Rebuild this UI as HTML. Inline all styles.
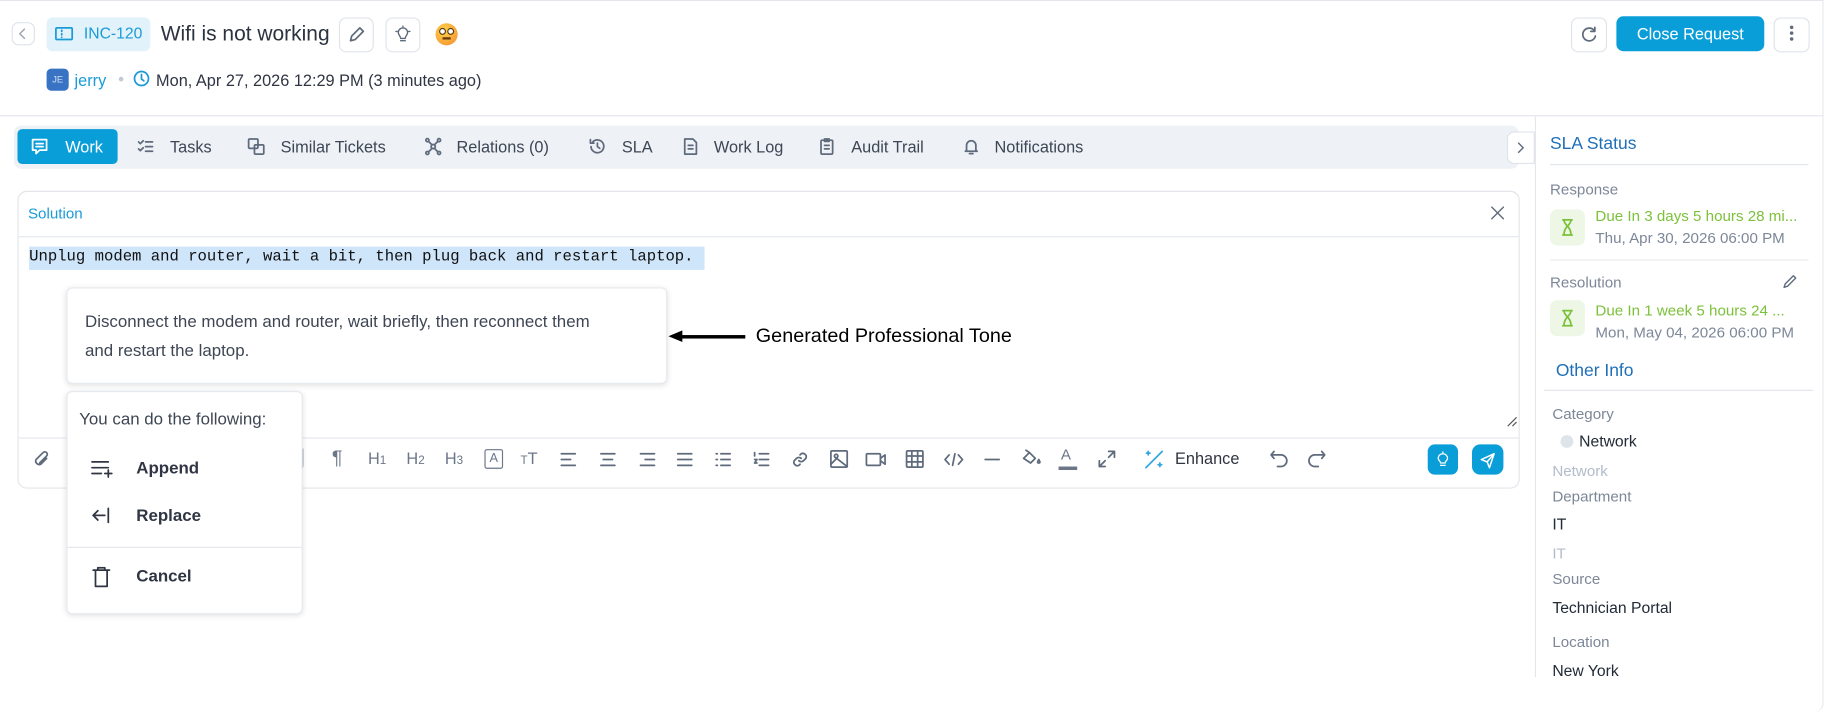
<!DOCTYPE html>
<html><head><meta charset="utf-8"><style>
*{box-sizing:border-box;margin:0;padding:0}
html,body{width:1826px;height:712px;overflow:hidden;background:#fff}
#s{position:absolute;left:0;top:0;width:1568px;height:612px;transform:scale(1.16454,1.16340);transform-origin:0 0;font-family:"Liberation Sans",sans-serif;color:#2f3542}
.a{position:absolute;white-space:nowrap}
.btn{position:absolute;border:1px solid #dfe3ea;border-radius:6px;background:#fff}
svg{position:absolute;fill:none;stroke:#5f6b7c;stroke-width:1.5;stroke-linecap:round;stroke-linejoin:round}
.tab{position:absolute;top:118px;font-size:14px;color:#3d4654}
.lbl{position:absolute;font-size:13px;color:#7c8798;white-space:nowrap}
.val{position:absolute;font-size:13.5px;color:#222b38;white-space:nowrap}
.tb{position:absolute;top:386px;font-size:14px;color:#6b7689}
</style></head><body><div id="s">
<div class="a" style="left:0;top:0;width:1566px;height:612px;border-top:1px solid #e4e7ec;border-right:1px solid #e4e7ec;border-bottom-right-radius:8px"></div>
<div class="a" style="left:0;top:99px;width:1566px;border-top:1px solid #e4e7ec"></div>
<div class="a" style="left:1318px;top:100px;height:482px;border-left:1px solid #e4e7ec"></div>

<div class="btn" style="left:10px;top:19px;width:20px;height:20px"></div>
<svg style="left:14px;top:23px" width="12" height="12"><path d="M7 2L3 6L7 10" stroke="#9aa3b0" stroke-width="1.2"/></svg>
<div class="a" style="left:40px;top:15px;width:89px;height:29px;background:#e1f2fb;border-radius:5px"></div>
<svg style="left:47px;top:22px;stroke:#1a9bd7" width="16" height="14"><rect x="1" y="2" width="14" height="10" rx="1"/><path d="M6 4v1M6 7v1M6 10v0"/></svg>
<div class="a" style="left:72px;top:21px;font-size:13.5px;color:#1a9bd7">INC-120</div>
<div class="a" style="left:138px;top:19px;font-size:18px;color:#2b3340">Wifi is not working</div>
<div class="btn" style="left:291px;top:15px;width:30px;height:30px"></div>
<svg style="left:298px;top:22px" width="16" height="16"><path d="M3 13l1-4 7-7 3 3-7 7z"/></svg>
<div class="btn" style="left:331px;top:15px;width:30px;height:30px"></div>
<svg style="left:338px;top:22px;stroke-width:1.2" width="16" height="16"><path d="M6 13h4M6 11c0-2-2-3-2-5a4 4 0 018 0c0 2-2 3-2 5zM8 0v1M2 5h1M13 5h1"/></svg>
<div class="a" style="left:374px;top:20px;width:19px;height:19px;border-radius:50%;background:radial-gradient(circle at 40% 35%,#ffd34a,#f48a2c)"></div>
<div class="a" style="left:378px;top:25px;width:4px;height:4px;border-radius:50%;background:#fff;box-shadow:0 0 0 1px #5a3a10"></div>
<div class="a" style="left:385px;top:25px;width:4px;height:4px;border-radius:50%;background:#fff;box-shadow:0 0 0 1px #5a3a10"></div>
<div class="a" style="left:380px;top:32px;width:7px;height:1.5px;background:#6b3a10"></div>

<div class="a" style="left:40px;top:59px;width:19px;height:19px;border-radius:4px;background:#3973c4;color:#cfe0f5;font-size:8px;text-align:center;line-height:19px">JE</div>
<div class="a" style="left:64px;top:61px;font-size:14px;color:#1a9bd7">jerry</div>
<div class="a" style="left:102px;top:66px;width:4px;height:4px;border-radius:50%;background:#c3cad4"></div>
<svg style="left:114px;top:60px;stroke:#1a9bd7" width="15" height="15"><circle cx="7.5" cy="7.5" r="6"/><path d="M7.5 4v4l2 1.5"/></svg>
<div class="a" style="left:134px;top:61px;font-size:14px;color:#2f3542">Mon, Apr 27, 2026 12:29 PM (3 minutes ago)</div>

<div class="btn" style="left:1349px;top:15px;width:31px;height:30px"></div>
<svg style="left:1357px;top:22px" width="16" height="16"><path d="M12.5 5A5.5 5.5 0 1 0 13 9M12.5 1.5v3.5H9"/></svg>
<div class="a" style="left:1388px;top:14px;width:127px;height:30px;background:#0a9ed9;border-radius:6px;color:#fff;font-size:14px;text-align:center;line-height:30px">Close Request</div>
<div class="btn" style="left:1523px;top:15px;width:31px;height:30px"></div>
<div class="a" style="left:1537px;top:22px;width:3px;height:3px;border-radius:50%;background:#5f6b7c;box-shadow:0 5px 0 #5f6b7c,0 10px 0 #5f6b7c"></div>

<div class="a" style="left:12px;top:108px;width:1292px;height:37px;background:#eef1f6;border-radius:6px"></div>
<div class="a" style="left:15px;top:111px;width:86px;height:30px;background:#0a9ed9;border-radius:4px"></div>
<svg style="left:26px;top:118px;stroke:#fff" width="16" height="16"><path d="M2 2h12v9H8l-3 3v-3H2zM5 5.5h6M5 8h6"/></svg>
<div class="tab" style="left:56px;color:#fff">Work</div>
<svg style="left:117px;top:118px" width="16" height="16"><path d="M2 4l1.5 1.5L6 3M2 10l1.5 1.5L6 9M8 4h6M8 8h6M8 12h6"/></svg>
<div class="tab" style="left:146px">Tasks</div>
<svg style="left:212px;top:118px" width="16" height="16"><rect x="1.5" y="1.5" width="8" height="8" rx="1"/><rect x="6.5" y="6.5" width="8" height="8" rx="1"/></svg>
<div class="tab" style="left:241px">Similar Tickets</div>
<svg style="left:364px;top:118px" width="16" height="16"><circle cx="8" cy="8" r="1.8"/><circle cx="3" cy="2.5" r="1.3"/><circle cx="13" cy="2.5" r="1.3"/><circle cx="3" cy="13.5" r="1.3"/><circle cx="13" cy="13.5" r="1.3"/><path d="M4 3.5l3 3M12 3.5l-3 3M4 12.5l3-3M12 12.5l-3-3"/></svg>
<div class="tab" style="left:392px">Relations (0)</div>
<svg style="left:505px;top:118px" width="16" height="16"><path d="M2.5 8A5.5 5.5 0 1 0 4 4M2 2v3h3M8 5v3l2 1.5"/></svg>
<div class="tab" style="left:534px">SLA</div>
<svg style="left:585px;top:118px" width="16" height="16"><path d="M3 1.5h7l3 3v10H3zM6 7h4M6 10h4"/></svg>
<div class="tab" style="left:613px">Work Log</div>
<svg style="left:702px;top:118px" width="16" height="16"><rect x="3" y="2.5" width="10" height="12" rx="1"/><path d="M6 1.5h4v2H6zM6 7h4M6 10h4"/></svg>
<div class="tab" style="left:731px">Audit Trail</div>
<svg style="left:826px;top:118px" width="16" height="16"><path d="M4 11V7a4 4 0 018 0v4l1 1H3zM6.5 14h3"/></svg>
<div class="tab" style="left:854px">Notifications</div>
<div class="btn" style="left:1294px;top:113px;width:24px;height:28px;border-radius:6px 0 0 6px"></div>
<svg style="left:1300px;top:121px" width="12" height="12"><path d="M4 2l4 4-4 4" stroke-width="1.2"/></svg>

<div class="a" style="left:15px;top:164px;width:1290px;height:256px;border:1px solid #e2e5ea;border-radius:8px"></div>
<div class="a" style="left:24px;top:176px;font-size:13px;color:#1a9bd7">Solution</div>
<svg style="left:1280px;top:177px" width="12" height="12"><path d="M1 1l10 10M11 1L1 11" stroke-width="1.2"/></svg>
<div class="a" style="left:16px;top:203px;width:1288px;border-top:1px solid #e4e7ec"></div>
<div class="a" style="left:25px;top:212px;height:20px;width:580px;background:#cfe5fa"></div>
<div class="a" style="left:25px;top:214px;font-family:'Liberation Mono',monospace;font-size:13.4px;color:#111">Unplug modem and router, wait a bit, then plug back and restart laptop.</div>
<svg style="left:1291px;top:355px" width="12" height="12"><path d="M11 4L4 11M11 8L8 11" stroke="#555" stroke-width="1"/></svg>
<div class="a" style="left:16px;top:376px;width:1288px;border-top:1px solid #e4e7ec"></div>

<svg style="left:28px;top:387px" width="16" height="16"><path d="M12 7l-5 5a3 3 0 01-4-4l6-6a2 2 0 013 3L6 11"/></svg>
<div class="tb" style="left:255px;font-size:16px">⌡</div>
<div class="tb" style="left:285px;font-size:17px;top:384px">¶</div>
<div class="tb" style="left:316px;font-size:14px">H<span style="font-size:10px">1</span></div>
<div class="tb" style="left:349px">H<span style="font-size:10px">2</span></div>
<div class="tb" style="left:382px">H<span style="font-size:10px">3</span></div>
<div class="a" style="left:416px;top:386px;width:16px;height:17px;border:1.5px solid #6b7689;border-radius:2px;font-size:11px;color:#6b7689;text-align:center;line-height:14px">A</div>
<div class="tb" style="left:447px"><span style="font-size:10px">T</span>T</div>
<svg style="left:480px;top:387px" width="16" height="16"><path d="M2 3h12M2 8h8M2 13h12"/></svg>
<svg style="left:514px;top:387px" width="16" height="16"><path d="M2 3h12M4 8h8M2 13h12"/></svg>
<svg style="left:548px;top:387px" width="16" height="16"><path d="M2 3h12M6 8h8M2 13h12"/></svg>
<svg style="left:580px;top:387px" width="16" height="16"><path d="M2 3h12M2 8h12M2 13h12"/></svg>
<svg style="left:613px;top:387px" width="16" height="16"><path d="M2 3h1M6 3h8M2 8h1M6 8h8M2 13h1M6 13h8"/></svg>
<svg style="left:646px;top:387px" width="16" height="16"><path d="M2 2v3M6 3h8M6 8h8M6 13h8M2 8h2l-2 3h2"/></svg>
<svg style="left:679px;top:387px" width="16" height="16"><path d="M7 9a3 3 0 004 0l2-2a3 3 0 00-4-4L8 4M9 7a3 3 0 00-4 0L3 9a3 3 0 004 4l1-1"/></svg>
<svg style="left:712px;top:386px" width="17" height="17"><rect x="1.5" y="1.5" width="14" height="14" rx="1"/><circle cx="6" cy="6" r="1.5"/><path d="M1.5 13l5-5 9 7"/></svg>
<svg style="left:743px;top:387px" width="19" height="16"><rect x="1" y="3" width="12" height="10" rx="1"/><path d="M13 7l4-3v8l-4-3"/></svg>
<svg style="left:777px;top:386px" width="17" height="17"><rect x="1.5" y="1.5" width="14" height="14" rx="1"/><path d="M6 1.5v14M11 1.5v14M1.5 6h14M1.5 11h14"/></svg>
<svg style="left:810px;top:387px" width="18" height="16"><path d="M5 4L1.5 8 5 12M13 4l3.5 4-3.5 4M10 3L8 13"/></svg>
<svg style="left:844px;top:387px" width="16" height="16"><path d="M2 8h12"/></svg>
<svg style="left:876px;top:385px" width="18" height="18"><path d="M3 9l5-5 5 5-4 4zM5 2l3 2M15 12a1 1 0 002 0l-1-2z"/></svg>
<div class="tb" style="left:911px;font-size:13px;top:383px">A</div>
<div class="a" style="left:909px;top:401px;width:16px;height:3px;background:#6b7689"></div>
<svg style="left:942px;top:386px" width="17" height="17"><path d="M10 2h5v5M15 2l-5 5M7 15H2v-5M2 15l5-5"/></svg>
<svg style="left:982px;top:386px;stroke:#2fa7df" width="18" height="18"><path d="M2 16L16 2M4 2v3M2.5 3.5h3M14 12v3M12.5 13.5h3"/></svg>
<div class="tb" style="left:1009px;color:#2f3542">Enhance</div>
<svg style="left:1090px;top:386px" width="17" height="17"><path d="M4 2L1.5 5 4 8M1.5 5H10a5 5 0 010 10H7"/></svg>
<svg style="left:1122px;top:386px" width="17" height="17"><path d="M13 2l2.5 3L13 8M15.5 5H7a5 5 0 000 10h3"/></svg>
<div class="a" style="left:1226px;top:382px;width:26px;height:26px;background:#0a9ed9;border-radius:6px"></div>
<svg style="left:1232px;top:388px;stroke:#fff;stroke-width:1.1" width="14" height="14"><path d="M5 12h4M5 10c0-2-2-2-2-4a4 4 0 018 0c0 2-2 2-2 4zM7 0v1"/></svg>
<div class="a" style="left:1264px;top:382px;width:27px;height:26px;background:#0a9ed9;border-radius:7px"></div>
<svg style="left:1270px;top:388px;stroke:#fff;stroke-width:1.3" width="15" height="15"><path d="M13 2L2 7l5 2 2 5zM13 2L7 9"/></svg>

<div class="a" style="left:57px;top:247px;width:516px;height:83px;background:#fff;border:1px solid #e6e9ee;border-radius:5px;box-shadow:0 1px 5px rgba(0,0,0,.12)"></div>
<div class="a" style="left:73px;top:265px;font-size:14.5px;line-height:24.5px;color:#3e4654;white-space:normal;width:450px">Disconnect the modem and router, wait briefly, then reconnect them and restart the laptop.</div>
<div class="a" style="left:584px;top:288px;width:56px;height:3px;background:#000"></div>
<svg style="left:574px;top:283px;fill:#000;stroke:none" width="12" height="12"><path d="M0 6L12 1v10z"/></svg>
<div class="a" style="left:649px;top:279px;font-size:17px;color:#000">Generated Professional Tone</div>

<div class="a" style="left:57px;top:336px;width:203px;height:192px;background:#fff;border:1px solid #e6e9ee;border-radius:5px;box-shadow:0 1px 5px rgba(0,0,0,.12)"></div>
<div class="a" style="left:68px;top:353px;font-size:14.5px;color:#3e4654">You can do the following:</div>
<svg style="left:78px;top:394px;stroke:#2f3542" width="20" height="20"><path d="M1 3h14M1 8h14M1 13h8M12 13h6M15 10v6"/></svg>
<div class="a" style="left:117px;top:395px;font-size:14.5px;font-weight:bold;color:#2f3542">Append</div>
<svg style="left:78px;top:435px;stroke:#2f3542" width="20" height="20"><path d="M2 8h10M6 4L2 8l4 4M15 2v12"/></svg>
<div class="a" style="left:117px;top:436px;font-size:14.5px;font-weight:bold;color:#2f3542">Replace</div>
<div class="a" style="left:58px;top:470px;width:201px;border-top:1px solid #e4e7ec"></div>
<svg style="left:78px;top:487px;stroke:#2f3542" width="20" height="20"><path d="M2 3h14M6 3V1h6v2M4 3v14h10V3"/></svg>
<div class="a" style="left:117px;top:488px;font-size:14.5px;font-weight:bold;color:#2f3542">Cancel</div>

<div class="a" style="left:1331px;top:115px;font-size:15px;color:#1f6fb7">SLA Status</div>
<div class="a" style="left:1331px;top:141px;width:222px;border-top:1px solid #e1e4ea"></div>
<div class="lbl" style="left:1331px;top:155px">Response</div>
<div class="a" style="left:1331px;top:180px;width:30px;height:31px;background:#eef7e6;border-radius:6px"></div>
<svg style="left:1339px;top:188px;stroke:#7cc13a" width="14" height="15"><path d="M3 1h8M3 14h8M4 1c0 5 6 5 6 13M10 1c0 5-6 5-6 13"/></svg>
<div class="a" style="left:1370px;top:178px;font-size:13px;color:#7cc13a">Due In 3 days 5 hours 28 mi...</div>
<div class="a" style="left:1370px;top:197px;font-size:13px;color:#7c8798">Thu, Apr 30, 2026 06:00 PM</div>
<div class="a" style="left:1331px;top:223px;width:222px;border-top:1px solid #e9ecf0"></div>
<div class="lbl" style="left:1331px;top:235px">Resolution</div>
<svg style="left:1530px;top:234px" width="15" height="15"><path d="M2 13l1-3 7-7 2 2-7 7z" stroke-width="1.2"/></svg>
<div class="a" style="left:1331px;top:258px;width:30px;height:31px;background:#eef7e6;border-radius:6px"></div>
<svg style="left:1339px;top:266px;stroke:#7cc13a" width="14" height="15"><path d="M3 1h8M3 14h8M4 1c0 5 6 5 6 13M10 1c0 5-6 5-6 13"/></svg>
<div class="a" style="left:1370px;top:259px;font-size:13px;color:#7cc13a">Due In 1 week 5 hours 24 ...</div>
<div class="a" style="left:1370px;top:278px;font-size:13px;color:#7c8798">Mon, May 04, 2026 06:00 PM</div>
<div class="a" style="left:1336px;top:310px;font-size:15px;color:#1f6fb7">Other Info</div>
<div class="a" style="left:1326px;top:335px;width:231px;border-top:1px solid #e1e4ea"></div>
<div class="lbl" style="left:1333px;top:348px">Category</div>
<div class="a" style="left:1340px;top:374px;width:11px;height:11px;border-radius:50%;background:#dfe3ea"></div>
<div class="val" style="left:1356px;top:372px">Network</div>
<div class="lbl" style="left:1333px;top:397px;color:#b2bccb">Network</div>
<div class="lbl" style="left:1333px;top:419px">Department</div>
<div class="val" style="left:1333px;top:443px">IT</div>
<div class="lbl" style="left:1333px;top:468px;color:#b2bccb">IT</div>
<div class="lbl" style="left:1333px;top:490px">Source</div>
<div class="val" style="left:1333px;top:515px">Technician Portal</div>
<div class="lbl" style="left:1333px;top:544px">Location</div>
<div class="val" style="left:1333px;top:569px">New York</div>
</div></body></html>
